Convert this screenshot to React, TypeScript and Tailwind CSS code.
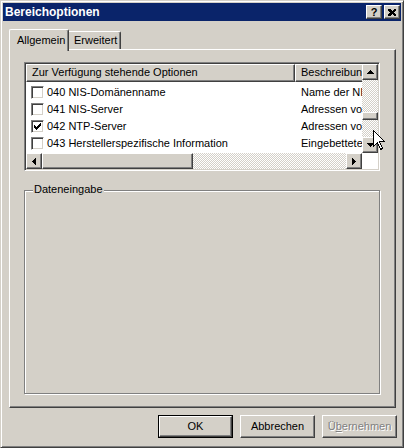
import React from "react";

const raised =
  "border border-t-white border-l-white border-r-[#404040] border-b-[#404040] shadow-[inset_-1px_-1px_0_#808080,inset_1px_1px_0_#d4d0c8] bg-[#d4d0c8]";

function Tri({ dir }: { dir: "up" | "down" | "left" | "right" }) {
  const rows = [1, 3, 5, 7];
  if (dir === "up" || dir === "down") {
    return (
      <svg width="7" height="4" shapeRendering="crispEdges">
        {rows.map((w, i) => (
          <rect key={i} x={(7 - w) / 2} y={dir === "up" ? i : 3 - i} width={w} height={1} fill="#000" />
        ))}
      </svg>
    );
  }
  return (
    <svg width="4" height="7" shapeRendering="crispEdges">
      {rows.map((w, i) => (
        <rect key={i} y={(7 - w) / 2} x={dir === "left" ? i : 3 - i} height={w} width={1} fill="#000" />
      ))}
    </svg>
  );
}

function ArrowBtn({ dir }: { dir: "up" | "down" | "left" | "right" }) {
  return (
    <div className={`${raised} w-[16px] h-[16px] shrink-0 flex items-center justify-center`}>
      <Tri dir={dir} />
    </div>
  );
}

function Check({ checked }: { checked?: boolean }) {
  return (
    <div className="w-[13px] h-[13px] shrink-0 bg-white border border-t-[#808080] border-l-[#808080] border-r-white border-b-white shadow-[inset_1px_1px_0_#404040,inset_-1px_-1px_0_#d4d0c8] flex items-center justify-center">
      {checked && (
        <svg width="7" height="7" shapeRendering="crispEdges">
          <rect x="6" y="0" width="1" height="3" fill="#000" />
          <rect x="5" y="1" width="1" height="3" fill="#000" />
          <rect x="4" y="2" width="1" height="3" fill="#000" />
          <rect x="3" y="3" width="1" height="3" fill="#000" />
          <rect x="2" y="4" width="1" height="3" fill="#000" />
          <rect x="1" y="3" width="1" height="3" fill="#000" />
          <rect x="0" y="2" width="1" height="3" fill="#000" />
        </svg>
      )}
    </div>
  );
}

const rows = [
  { name: "040 NIS-Domänenname", desc: "Name der NIS-Domäne", checked: false },
  { name: "041 NIS-Server", desc: "Adressen von NIS-Servern", checked: false },
  { name: "042 NTP-Server", desc: "Adressen von NTP-Servern", checked: true },
  { name: "043 Herstellerspezifische Information", desc: "Eingebettete herstellerspezifische Optionen", checked: false },
];

const checker =
  "bg-[repeating-conic-gradient(#d4d0c8_0%_25%,#ffffff_0%_50%)] bg-[length:2px_2px]";

export default function App() {
  return (
    <div
      className="relative w-[404px] h-[448px] bg-[#d4d0c8] border border-t-[#d4d0c8] border-l-[#d4d0c8] border-r-[#404040] border-b-[#404040] shadow-[inset_1px_1px_0_#ffffff,inset_-1px_-1px_0_#808080] p-[2px] text-[11px] text-black overflow-hidden"
      style={{ fontFamily: '"Liberation Sans", Arial, sans-serif' }}
    >
      {/* Title bar */}
      <div className="h-[18px] bg-[#0a246a] flex items-center justify-between pl-[2px] pr-[1px]">
        <span className="text-white font-bold text-[12px] leading-none">Bereichoptionen</span>
        <div className="flex gap-[2px]">
          <div className={`${raised} w-[16px] h-[14px] flex items-center justify-center font-bold text-[11px] leading-none`}>?</div>
          <div className={`${raised} w-[16px] h-[14px] flex items-center justify-center`}>
            <svg width="8" height="7" shapeRendering="crispEdges">
              <path d="M0 0h2l2 2 2-2h2v1l-2 2.5 2 2.5v1h-2l-2-2-2 2h-2v-1l2-2.5-2-2.5z" fill="#000" />
            </svg>
          </div>
        </div>
      </div>

      {/* Body */}
      <div className="pl-[6px]">
        {/* Tabs */}
        <div className="mt-[8px] h-[22px] flex items-end relative z-10">
          <div className="w-[60px] h-[22px] bg-[#d4d0c8] border-l border-t border-l-white border-t-white border-r border-r-[#404040] shadow-[inset_-1px_0_0_#808080] rounded-t-[2px] pl-[7px] pt-[4px] leading-[13px]">
            Allgemein
          </div>
          <div className="w-[52px] h-[18px] mb-[2px] bg-[#d4d0c8] border-t border-t-white border-r border-r-[#404040] shadow-[inset_-1px_0_0_#808080] rounded-tr-[2px] pl-[5px] pt-[2px] leading-[13px]">
            Erweitert
          </div>
        </div>

        {/* Panel */}
        <div className="mt-[-2px] w-[387px] h-[359px] border border-t-white border-l-white border-r-[#404040] border-b-[#404040] shadow-[inset_-1px_-1px_0_#808080] pl-[14px] pt-[12px]">
          {/* List view */}
          <div className="w-[356px] h-[109px] border border-t-[#808080] border-l-[#808080] border-r-white border-b-white shadow-[inset_1px_1px_0_#404040,inset_-1px_-1px_0_#d4d0c8] p-[1px] flex flex-col bg-white">
            <div className="h-[89px] flex">
              <div className="w-[336px] overflow-hidden">
                <div className="h-[18px] flex">
                  <div className={`${raised} w-[269px] shrink-0 pl-[5px] leading-[15px] whitespace-nowrap overflow-hidden`}>
                    Zur Verfügung stehende Optionen
                  </div>
                  <div className={`${raised} w-[100px] shrink-0 pl-[5px] leading-[15px] whitespace-nowrap overflow-hidden`}>
                    Beschreibung
                  </div>
                </div>
                <div className="pt-[2px]">
                  {rows.map((r) => (
                    <div key={r.name} className="h-[17px] flex items-center whitespace-nowrap">
                      <div className="w-[269px] shrink-0 flex items-center pl-[5px] gap-[3px]">
                        <Check checked={r.checked} />
                        <span>{r.name}</span>
                      </div>
                      <span className="pl-[6px]">{r.desc}</span>
                    </div>
                  ))}
                </div>
              </div>
              {/* vertical scrollbar */}
              <div className="w-[16px] flex flex-col">
                <ArrowBtn dir="up" />
                <div className={`flex-1 ${checker} pt-[32px]`}>
                  <div className={`${raised} w-[16px] h-[8px]`} />
                </div>
                <ArrowBtn dir="down" />
              </div>
            </div>
            <div className="h-[16px] flex">
              <ArrowBtn dir="left" />
              <div className={`${raised} w-[151px] h-[16px] shrink-0`} />
              <div className={`flex-1 ${checker}`} />
              <ArrowBtn dir="right" />
              <div className="w-[16px] bg-white" />
            </div>
          </div>

          {/* Group box */}
          <div className="relative mt-[19px] w-[356px] h-[204px] border border-[#808080] shadow-[inset_1px_1px_0_#ffffff,1px_1px_0_#ffffff]">
            <span className="absolute left-[8px] top-[-8px] bg-[#d4d0c8] px-[1px] leading-[13px]">Dateneingabe</span>
          </div>
        </div>
      </div>

      {/* Buttons */}
      <div className="mt-[7px] flex justify-end gap-[7px] pr-[4px]">
        <div className="w-[75px] h-[23px] border border-black">
          <div className={`${raised} w-full h-full flex items-center justify-center`}>OK</div>
        </div>
        <div className={`${raised} w-[75px] h-[23px] flex items-center justify-center`}>Abbrechen</div>
        <div className={`${raised} w-[75px] h-[23px] flex items-center justify-center text-[#808080] [text-shadow:1px_1px_0_#ffffff]`}>
          Ü<span className="underline">b</span>ernehmen
        </div>
      </div>

      {/* Mouse cursor */}
      <svg className="absolute left-[372px] top-[129px]" width="13" height="21" shapeRendering="crispEdges">
        <polygon points="0.5,0.5 0.5,16.5 4.5,12.5 7.5,19.5 9.5,18.5 6.5,11.5 11.5,11.5" fill="#fff" stroke="#000" strokeWidth="1" />
      </svg>
    </div>
  );
}
